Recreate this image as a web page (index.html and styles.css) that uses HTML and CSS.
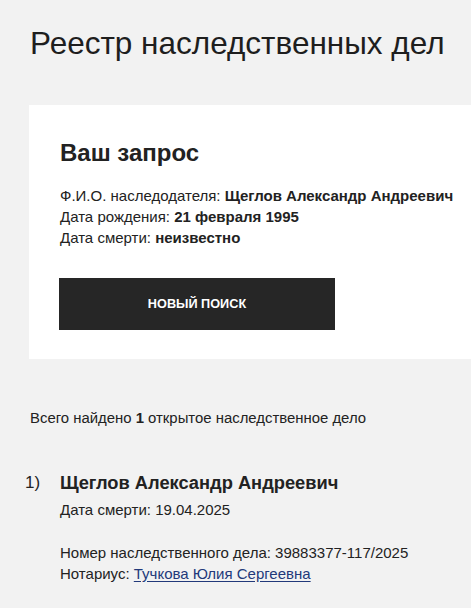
FILE: index.html
```html
<!DOCTYPE html>
<html lang="ru">
<head>
<meta charset="utf-8">
<link rel="stylesheet" href="styles.css">
</head>
<body>
<main class="page">
  <h1 class="title">Реестр наследственных дел</h1>
  <section class="card">
    <h2 class="card-title">Ваш запрос</h2>
    <div class="info">
      <div>Ф.И.О. наследодателя: <b>Щеглов Александр Андреевич</b></div>
      <div>Дата рождения: <b>21 февраля 1995</b></div>
      <div>Дата смерти: <b>неизвестно</b></div>
    </div>
    <button class="btn">НОВЫЙ ПОИСК</button>
  </section>
  <p class="summary">Всего найдено <b>1</b> открытое наследственное дело</p>
  <ol class="results">
    <li class="result">
      <span class="num">1)</span>
      <div class="result-body">
        <div class="name">Щеглов Александр Андреевич</div>
        <div class="death">Дата смерти: 19.04.2025</div>
        <div class="meta">
          <div>Номер наследственного дела: 39883377-117/2025</div>
          <div>Нотариус: <a href="#" class="link">Тучкова Юлия Сергеевна</a></div>
        </div>
      </div>
    </li>
  </ol>
</main>
</body>
</html>
```
FILE: styles.css
```css
html, body {
  margin: 0;
  padding: 0;
  background: #f2f2f2;
}
body {
  font-family: "Liberation Sans", Arial, sans-serif;
  color: #222;
}
.page {
  padding: 23px 0 0 29px;
}
.title {
  margin: 0;
  font-size: 31.5px;
  font-weight: 400;
  line-height: 40px;
  padding-left: 1px;
  color: #1e1e1e;
}
.card {
  margin-top: 42px;
  background: #fff;
  padding: 34px 0 29px 30px;
}
.card-title {
  margin: 0;
  padding-left: 1px;
  font-size: 24px;
  font-weight: 700;
  line-height: 28px;
}
.info {
  margin-top: 18px;
  padding-left: 1px;
  font-size: 15px;
  line-height: 21px;
}
.info b {
  font-weight: 700;
}
.btn {
  display: block;
  margin-top: 30px;
  width: 276px;
  height: 52px;
  border: 0;
  background: #262626;
  color: #fff;
  font-family: inherit;
  font-weight: 700;
  font-size: 12.7px;
  padding: 0;
}
.summary {
  margin: 49px 0 0 1px;
  font-size: 14.9px;
  line-height: 20px;
}
.results {
  list-style: none;
  margin: 42px 0 0 0;
  padding: 0;
}
.result {
  display: flex;
}
.num {
  width: 31px;
  margin-left: -4px;
  font-size: 17px;
  line-height: 26px;
}
.result-body {
  padding-left: 4px;
}
.name {
  font-size: 18.3px;
  font-weight: 700;
  line-height: 26px;
}
.death {
  margin-top: 4px;
  font-size: 15px;
  line-height: 20px;
}
.meta {
  margin-top: 22px;
  font-size: 15px;
  line-height: 21px;
}
.link {
  color: #22397a;
  text-underline-offset: 2px;
}
```
